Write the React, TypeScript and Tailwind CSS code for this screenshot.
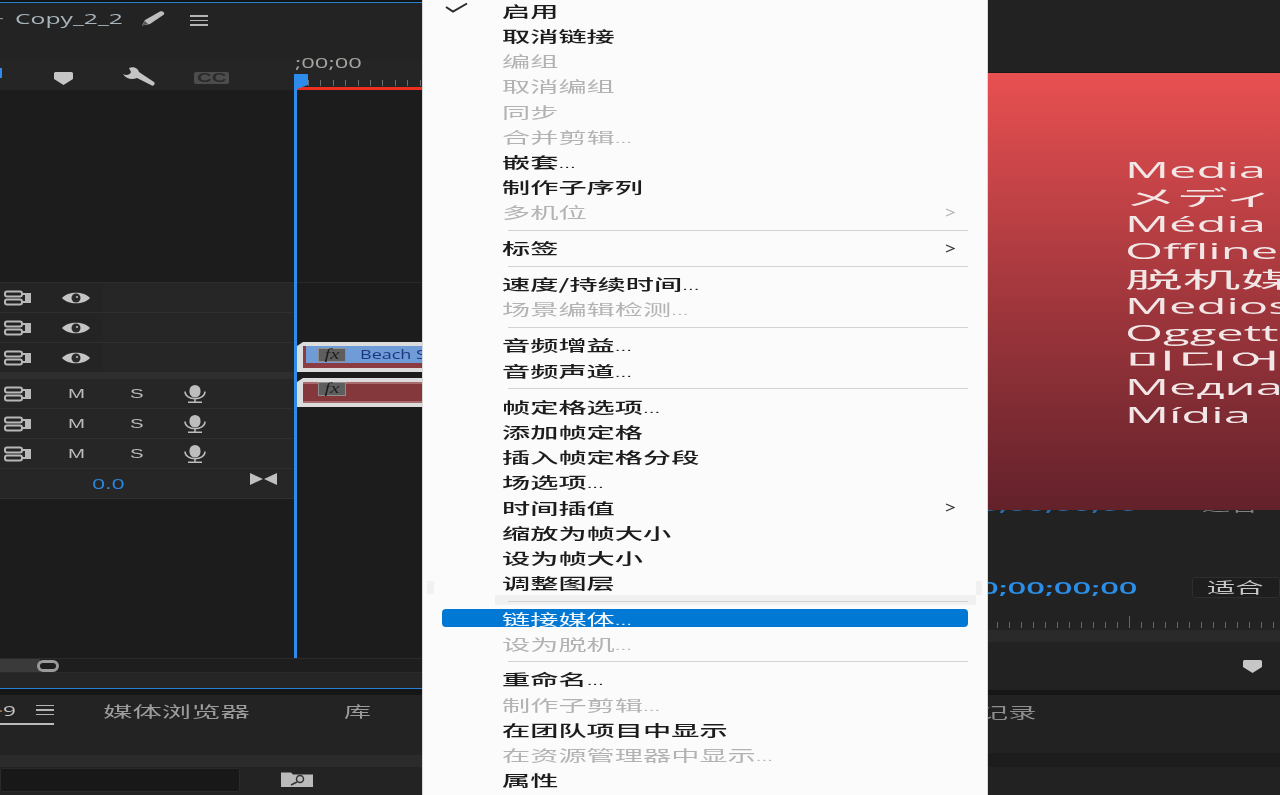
import React from "react";

const CJK = "font-['Noto_Sans_CJK_SC',sans-serif]";

type Item = { t: string; dim?: boolean; arrow?: boolean; check?: boolean; hi?: boolean; sep?: "a" | "b" };
const menu: Item[] = [
  { t: "启用", check: true },
  { t: "取消链接" },
  { t: "编组", dim: true },
  { t: "取消编组", dim: true },
  { t: "同步", dim: true },
  { t: "合并剪辑...", dim: true },
  { t: "嵌套..." },
  { t: "制作子序列" },
  { t: "多机位", dim: true, arrow: true },
  { t: "", sep: "a" },
  { t: "标签", arrow: true },
  { t: "", sep: "b" },
  { t: "速度/持续时间..." },
  { t: "场景编辑检测...", dim: true },
  { t: "", sep: "b" },
  { t: "音频增益..." },
  { t: "音频声道..." },
  { t: "", sep: "b" },
  { t: "帧定格选项..." },
  { t: "添加帧定格" },
  { t: "插入帧定格分段" },
  { t: "场选项..." },
  { t: "时间插值", arrow: true },
  { t: "缩放为帧大小" },
  { t: "设为帧大小" },
  { t: "调整图层" },
  { t: "", sep: "a" },
  { t: "链接媒体...", hi: true },
  { t: "设为脱机...", dim: true },
  { t: "", sep: "a" },
  { t: "重命名..." },
  { t: "制作子剪辑...", dim: true },
  { t: "在团队项目中显示" },
  { t: "在资源管理器中显示...", dim: true },
  { t: "属性" },
];

const videoLines = [
  { t: "Media Offline", c: "scale-x-[2.330] font-medium" },
  { t: "メディアオフライン", c: "scale-x-[2.450] font-normal" },
  { t: "Média hors ligne", c: "scale-x-[2.330] font-medium" },
  { t: "Offline-Medien", c: "scale-x-[2.330] font-medium" },
  { t: "脱机媒体文件", c: "scale-x-[2.750] font-normal" },
  { t: "Medios sin conexión", c: "scale-x-[2.330] font-medium" },
  { t: "Oggetto multimediale", c: "scale-x-[2.330] font-medium" },
  { t: "미디어 오프라인", c: "scale-x-[2.700] font-normal" },
  { t: "Медиаданные", c: "scale-x-[2.330] font-medium" },
  { t: "Mídia offline", c: "scale-x-[2.330] font-medium" },
];

function TrackIcon() {
  return (
    <svg width="28" height="16" viewBox="0 0 28 16" fill="none" stroke="#b8b8b8" strokeWidth="2">
      <rect x="1" y="1.5" width="17" height="5" rx="2" />
      <rect x="1" y="9.5" width="17" height="5" rx="2" />
      <path d="M18 4h8v8h-8" />
      <rect x="21" y="5" width="5" height="6" fill="#b8b8b8" stroke="none" />
    </svg>
  );
}
function Eye() {
  return (
    <svg width="28" height="14" viewBox="0 0 28 14">
      <path d="M0 7C6 0 22 0 28 7C22 14 6 14 0 7Z" fill="#c4c4c4" />
      <circle cx="14" cy="7" r="4.5" fill="#2a2a2a" />
      <circle cx="15" cy="6" r="1" fill="#c4c4c4" />
    </svg>
  );
}
function Mic() {
  return (
    <svg width="22" height="18" viewBox="0 0 22 18" fill="none">
      <rect x="5.500" y="0" width="11" height="12.500" rx="5.500" fill="#bdbdbd" />
      <path d="M1 6.500c0 9.500 20 9.500 20 0M11 14.500v2.500M4 17.200h14" stroke="#bdbdbd" strokeWidth="1.500" />
    </svg>
  );
}
function Marker({ className = "" }: { className?: string }) {
  return (
    <svg className={className} width="19" height="13" viewBox="0 0 19 13">
      <path d="M1.500 0H17.500A1.500 1.500 0 0 1 19 1.500V7L9.500 13L0 7V1.500A1.500 1.500 0 0 1 1.500 0Z" fill="#c6c6c6" />
    </svg>
  );
}
function Burger({ w = 18 }: { w?: number }) {
  return (
    <div className="flex flex-col gap-[3px]" style={{ width: w }}>
      <div className="h-[1.500px] bg-[#b4b4b4]" />
      <div className="h-[1.500px] bg-[#b4b4b4]" />
      <div className="h-[1.500px] bg-[#b4b4b4]" />
    </div>
  );
}
function Wide({ children, className = "scale-x-[1.880]" }: { children: React.ReactNode; className?: string }) {
  return <span className={"inline-block origin-left whitespace-nowrap " + className}>{children}</span>;
}
function MenuText({ t }: { t: string }) {
  const dots = t.endsWith("...");
  return (
    <Wide>
      {dots ? t.slice(0, -3) : t}
      {dots && <span className="text-[11px] font-['Liberation_Sans',sans-serif]">...</span>}
    </Wide>
  );
}

function VideoRow() {
  return (
    <div className="h-[30px] flex items-center bg-[#262626] border-b border-[#2f2f2f]">
      <div className="w-[103px] h-full flex items-center bg-[#242424] shrink-0">
        <div className="ml-[4px]"><TrackIcon /></div>
        <div className="ml-[30px]"><Eye /></div>
      </div>
    </div>
  );
}
function AudioRow() {
  return (
    <div className="h-[30px] flex items-center bg-[#262626] border-b border-[#2f2f2f]">
      <div className="ml-[4px]"><TrackIcon /></div>
      <span className="ml-[36px] w-[62px] font-['Liberation_Sans',sans-serif] text-[#bdbdbd] text-[12px]"><span className="inline-block origin-left scale-x-[1.700]">M</span></span>
      <span className="w-[54px] font-['Liberation_Sans',sans-serif] text-[#bdbdbd] text-[12px]"><span className="inline-block origin-left scale-x-[1.700]">S</span></span>
      <Mic />
    </div>
  );
}
function Fx() {
  return (
    <div className="w-[28px] h-[14px] bg-[#5e5e5e] border border-[#8f8f8f] flex items-center justify-center text-[#1e1e1e] text-[14px] leading-none italic font-['Liberation_Serif',serif]">
      <span className="scale-x-[1.500]">fx</span>
    </div>
  );
}
function ClipCorner() {
  return (
    <svg className="absolute left-0 top-0" width="6" height="4" viewBox="0 0 6 4">
      <path d="M0 0H6L0 4Z" fill="#1c1c1c" />
    </svg>
  );
}

function Left() {
  return (
    <div className="relative w-[422px] h-[795px] shrink-0 overflow-hidden flex flex-col bg-[#232323]">
      <div className="h-[2px] bg-[#141414]" />
      <div className="h-[1px] bg-[#2680d0]" />
      <div className="h-[57px] flex items-start pt-[4px] relative">
        <span className="ml-[-1px] w-[16px] text-[#999] text-[14px] font-['Open_Sans',sans-serif]">-</span>
        <span className="w-[125px] text-[#a8b4bc] text-[15px] font-['Open_Sans',sans-serif] leading-[22px]">
          <span className="inline-block origin-left scale-x-[1.650] whitespace-nowrap">Copy_2_2</span>
        </span>
        <svg className="mt-[3px]" width="26" height="16" viewBox="0 0 26 16">
          <path d="M5 10L20 1.500C22 .5 25 2 24 4.500L10 14L2 15.500Z" fill="#bdbdbd" />
          <path d="M2 15.500L5 11L8 14Z" fill="#555" />
        </svg>
        <div className="ml-[24px] mt-[8px]"><Burger /></div>
      </div>
      <div className="h-[30px] flex bg-[#252525] relative">
        <div className="w-[294px] flex items-center shrink-0 relative">
          <div className="w-[2px] h-[10px] mt-[-4px] bg-[#2d8ceb]" />
          <Marker className="ml-[52px] mt-[6px]" />
          <svg className="ml-[50px] mt-[4px]" width="32" height="20" viewBox="0 0 32 20">
            <path d="M0 7C3 9 7 8 8 5L6 1C10 -1 15 1 16 5L31 15C33 17 30 20 28 18L14 11C9 13 3 12 0 7Z" fill="#c4c4c4" />
          </svg>
          <div className="ml-[39px] mt-[6px] w-[35px] h-[12px] rounded-[2px] bg-[#4c4c4c] flex items-center justify-center text-[#2a2a2a] text-[12px] leading-none font-bold font-['Liberation_Sans',sans-serif]">
            <span className="scale-x-[1.700]">CC</span>
          </div>
        </div>
        <div className="flex-1 relative flex flex-col justify-end">
          <div className="flex items-end gap-[11.400px] pl-[14px] h-[7px] mb-[1px]">
            {Array.from({ length: 10 }).map((_, i) => (
              <div key={i} className="w-[1px] h-[6px] bg-[#6d6d6d]" />
            ))}
          </div>
          <div className="h-[3px] bg-[#f0301f]" />
        </div>
      </div>
      <div className="h-[568px] flex bg-[#1c1c1c]">
        <div className="w-[294px] shrink-0 flex flex-col">
          <div className="h-[192px] shrink-0" />
          <div className="border-t border-[#2d2d2d]"><VideoRow /><VideoRow /><VideoRow /></div>
          <div className="h-[6px] bg-[#2e2e2e]" />
          <AudioRow />
          <AudioRow />
          <AudioRow />
          <div className="h-[30px] relative flex items-center bg-[#262626] border-b border-[#2f2f2f]">
            <span className="ml-[92px] text-[#2b86dc] text-[15px] font-['Open_Sans',sans-serif]">
              <span className="inline-block origin-left scale-x-[1.550]">0.0</span>
            </span>
            <svg className="absolute left-[250px] top-[4px]" width="27" height="12" viewBox="0 0 27 12">
              <path d="M0 0L13 6L0 12ZM27 0L14 6L27 12Z" fill="#c0c0c0" />
            </svg>
          </div>
        </div>
        <div className="flex-1 flex flex-col pl-[3px]">
          <div className="h-[192px] shrink-0" />
          <div className="h-[60px] border-t border-[#292929]" />
          <div className="relative h-[30px] bg-[#dcdcdc] pl-[6px] pt-[4px] pb-[4px]">
            <ClipCorner />
            <div className="h-full bg-[#8c3c40] pl-[3px] pb-[5px]">
              <div className="h-full bg-[#6f9bd6] flex items-center pl-[12px]">
                <Fx />
                <span className="ml-[14px] text-[#1c3580] text-[12px] font-['Open_Sans',sans-serif]">
                  <span className="inline-block origin-left scale-x-[1.500] whitespace-nowrap">Beach Scene</span>
                </span>
              </div>
            </div>
          </div>
          <div className="h-[6px]" />
          <div className="relative h-[29px] bg-[#dcdcdc] pl-[6px] pt-[4px] pb-[4px]">
            <ClipCorner />
            <div className="h-full bg-[#85383c] pl-[12px] relative border-t-2 border-b-2 border-[#a86a6c]">
              <div className="absolute top-[-2px] left-[15px]"><Fx /></div>
            </div>
          </div>
        </div>
      </div>
      <div className="h-[15px] border-y border-[#2b2b2b] bg-[#1e1e1e] flex items-center relative">
        <div className="w-[40px] h-full bg-[#3a3a3a]" />
        <div className="w-[22px] h-[12px] rounded-full border-[3px] border-[#9a9a9a] bg-[#1e1e1e] ml-[-3px]" />
      </div>
      <div className="h-[15px] bg-[#252525]" />
      <div className="h-[1px] bg-[#2680d0]" />
      <div className="h-[6px] bg-[#161616]" />
      <div className="h-[60px] bg-[#232323] relative flex items-start">
        <div className="w-[54px] h-[30px] border-b-2 border-[#bbb] flex items-center justify-end">
          <span className="absolute left-[-1px] top-[4px] text-[#c4c4c4] text-[15px] font-['Open_Sans',sans-serif]">
            <span className="text-[#b88a50]">·</span>
            <span className="inline-block origin-left scale-x-[1.500]">9</span>
          </span>
          <div className="mb-[-2px]"><Burger w={18} /></div>
        </div>
        <span className={"ml-[49px] mt-[4px] w-[241px] text-[15px] leading-[24px] text-[#9c9c9c] " + CJK}><Wide className="scale-x-[1.960]">媒体浏览器</Wide></span>
        <span className={"mt-[4px] text-[15px] leading-[24px] text-[#9c9c9c] " + CJK}><Wide className="scale-x-[1.800]">库</Wide></span>
      </div>
      <div className="h-[12px] bg-[#2b2b2b]" />
      <div className="flex-1 flex items-start bg-[#232323]">
        <div className="w-[240px] h-[24px] mt-[1px] bg-[#181818] border border-[#2a2a2a] rounded-[2px]" />
        <svg className="ml-[41px] mt-[4px]" width="33" height="16" viewBox="0 0 33 16">
          <path d="M0 1.500h10l2 2h20v12.500H0Z" fill="#bababa" />
          <circle cx="19" cy="8" r="3.500" fill="none" stroke="#333" strokeWidth="1.500" />
          <path d="M16 11L10 14" stroke="#333" strokeWidth="1.500" />
        </svg>
      </div>
      {/* playhead */}
      <div className="absolute left-[294px] top-[74px] w-[3px] h-[584px] bg-[#2d8ceb]" />
      <svg className="absolute left-[294px] top-[74px]" width="14" height="15" viewBox="0 0 14 15">
        <path d="M1 0H13A1 1 0 0 1 14 1V11L3 15H0V1A1 1 0 0 1 1 0Z" fill="#2d8ceb" />
      </svg>
      <span className="absolute left-[295px] top-[52px] text-[#a4a4a0] text-[14px] leading-[22px] font-['Open_Sans',sans-serif]">
        <span className="inline-block origin-left scale-x-[1.700] whitespace-nowrap">;00;00</span>
      </span>
    </div>
  );
}

function Menu() {
  return (
    <div className="relative w-[566px] h-[795px] shrink-0 overflow-hidden bg-[#fbfbfb] border-l border-r border-[#d8d8d8]">
      <div className="absolute left-[4px] top-[581px] w-[7px] h-[13px] bg-[#f1f1f1]" />
      <div className="absolute left-[72px] top-[595px] w-[481px] h-[10px] bg-[#f1f1f1]" />
      <div className="absolute left-[553px] top-[581px] w-[6px] h-[14px] bg-[#f1f1f1]" />
      <div className={"relative mt-[-1.600px] flex flex-col text-[15px] " + CJK}>
        {menu.map((m, i) =>
          m.sep ? (
            <div key={i} className={(m.sep === "a" ? "h-[10.400px]" : "h-[11px]") + " flex items-center pl-[85px] pr-[19px]"}>
              <div className="h-[1px] w-full bg-[#d2d2d2]" />
            </div>
          ) : (
            <div key={i} className="h-[25.200px] flex items-center relative pl-[79px] pr-[32px]">
              {m.hi && <div className="absolute left-[19px] right-[19px] top-[3px] h-[18px] rounded-[4px] bg-[#0078d4]" />}
              {m.check && (
                <svg className="absolute left-[22px] top-[4px]" width="23" height="11" viewBox="0 0 23 11" fill="none">
                  <path d="M1 5L8 9.500L22 1.500" stroke="#2a2a2a" strokeWidth="2" />
                </svg>
              )}
              <span className={"relative flex-1 " + (m.hi ? "text-[#f4f8fc]" : m.dim ? "text-[#b3b3b3]" : "text-[#1c1c1c] font-medium")}>
                <MenuText t={m.t} />
              </span>
              {m.arrow && (
                <svg width="10" height="9" viewBox="0 0 10 9" fill="none">
                  <path d="M1 1L9 4.500L1 8" stroke={m.dim ? "#b3b3b3" : "#333"} strokeWidth="1.300" />
                </svg>
              )}
            </div>
          )
        )}
      </div>
    </div>
  );
}

function Right() {
  return (
    <div className="flex-1 h-[795px] overflow-hidden flex flex-col bg-[#222222]">
      <div className="h-[73px] shrink-0 bg-[#222222] border-b border-[#1a1a1a]" />
      <div className="h-[437px] shrink-0 bg-gradient-to-b from-[#e95051] to-[#63212a] pt-[84px] pl-[140px] overflow-hidden">
        {videoLines.map((l) => (
          <div key={l.t} className="h-[27.200px] ml-[-3px] flex items-center text-[21px] text-[#f2e6e6] [word-spacing:8px] font-['Open_Sans','Noto_Sans_CJK_SC',sans-serif]">
            <span className={"inline-block origin-left whitespace-nowrap " + l.c}>{l.t}</span>
          </div>
        ))}
      </div>
      <div className="h-[3px] shrink-0 overflow-hidden flex opacity-70">
        <span className="ml-[-8px] mt-[-16px] text-[#2b8ee8] text-[17px] leading-[22px] font-semibold font-['Open_Sans',sans-serif]">
          <span className="inline-block origin-left scale-x-[1.920] whitespace-nowrap">0;00;00;00</span>
        </span>
        <span className={"ml-[140px] mt-[-16px] text-[#aaa] text-[15px] leading-[22px] " + CJK}>
          <Wide>适合</Wide>
        </span>
      </div>
      <div className="h-[64px] shrink-0" />
      <div className="h-[21px] shrink-0 flex items-center">
        <span className="ml-[-8px] text-[#2b8ee8] text-[17px] font-semibold font-['Open_Sans',sans-serif]">
          <span className="inline-block origin-left scale-x-[1.920] whitespace-nowrap">0;00;00;00</span>
        </span>
        <div className={"ml-auto w-[88px] h-[21px] border border-[#2e2e2e] rounded-[3px] bg-[#1e1e1e] pl-[14px] flex items-center text-[15px] text-[#c8c8c8] " + CJK}>
          <Wide>适合</Wide>
        </div>
      </div>
      <div className="h-[32px] shrink-0 flex items-end gap-[11px] pl-[9px] pb-[2px]">
        {Array.from({ length: 24 }).map((_, i) => (
          <div key={i} className={"w-[1px] bg-[#666] " + (i === 11 ? "h-[12px]" : "h-[6px]")} />
        ))}
      </div>
      <div className="h-[12px] shrink-0 bg-[#2a2a2a]" />
      <div className="h-[48px] shrink-0 flex items-center justify-end pr-[18px]"><Marker /></div>
      <div className="h-[5px] shrink-0 bg-[#161616]" />
      <div className="h-[58px] shrink-0 pt-[5px] ml-[-8px]">
        <span className={"text-[15px] text-[#8e8e8e] " + CJK}><Wide>记录</Wide></span>
      </div>
      <div className="h-[14px] shrink-0 bg-[#1c1c1c]" />
      <div className="flex-1" />
    </div>
  );
}

export default function App() {
  return (
    <div className="flex w-[1280px] h-[795px] overflow-hidden bg-[#222] blur-[0.4px]">
      <Left />
      <Menu />
      <Right />
    </div>
  );
}
